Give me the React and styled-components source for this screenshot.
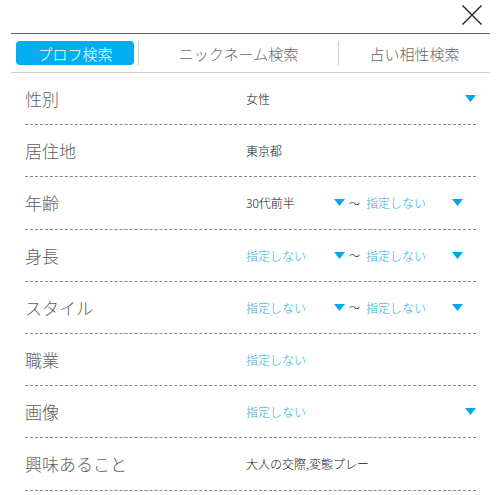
import React from "react";
import styled, { createGlobalStyle } from "styled-components";

const Global = createGlobalStyle`
  html, body { margin: 0; padding: 0; background: #fff; }
  body { font-family: "Noto Sans CJK JP", "Noto Sans", sans-serif; }
`;

const Page = styled.div`
  width: 501px;
  height: 495px;
  overflow: hidden;
  background: #fff;
`;

const TopBar = styled.div`
  height: 33px;
  display: flex;
  justify-content: flex-end;
  align-items: flex-start;
  padding-right: 19px;
  box-sizing: border-box;
`;

const CloseButton = styled.button`
  border: 0;
  background: none;
  padding: 0;
  margin-top: 5px;
  width: 20px;
  height: 20px;
  cursor: pointer;
  display: block;
`;

const Panel = styled.div`
  margin: 0 11px;
`;

const Tabs = styled.div`
  display: flex;
  align-items: center;
  border-top: 1px solid #666;
  border-bottom: 1px solid #ccc;
  padding: 7px 0;
`;

const Tab = styled.div`
  width: ${(p) => p.$w}px;
  height: 24px;
  display: flex;
  align-items: center;
  justify-content: center;
  box-sizing: border-box;
  border-left: ${(p) => (p.$divider ? "1px solid #ccc" : "0")};
`;

const TabButton = styled.div`
  height: 24px;
  width: 100%;
  display: flex;
  align-items: center;
  justify-content: center;
  border-radius: 4px;
  font-size: 15px;
  font-weight: 300;
  color: ${(p) => (p.$active ? "#fff" : "#666")};
  background: ${(p) => (p.$active ? "#00aeef" : "transparent")};
`;

const ActiveWrap = styled.div`
  width: 127px;
  padding: 0 4px 0 5px;
  box-sizing: border-box;
`;

const Rows = styled.div`
  padding: 0 14px;
`;

const Row = styled.div`
  display: flex;
  align-items: center;
  height: 52.2px;
  box-sizing: border-box;
  border-bottom: 1px dashed #888;
`;

const Label = styled.div`
  width: 221px;
  flex: none;
  font-size: 17px;
  font-weight: 300;
  color: #5e5e5e;
`;

const Value = styled.div`
  flex: 1;
  display: flex;
  align-items: center;
`;

const Select = styled.div`
  display: flex;
  align-items: center;
  justify-content: space-between;
  ${(p) => (p.$w ? `width: ${p.$w}px;` : "flex: 1;")}
  font-size: 12px;
  font-weight: 300;
  color: ${(p) => (p.$placeholder ? "#2ea7e0" : "#111")};
`;

const Plain = styled.div`
  font-size: 12px;
  font-weight: 300;
  color: #111;
`;

const LinkText = styled.div`
  font-size: 12px;
  font-weight: 300;
  color: #2ea7e0;
`;

const Tilde = styled.span`
  font-size: 11px;
  font-weight: 300;
  color: #111;
  margin: 0 6px 0 4px;
  width: 11px;
`;

const Caret = () => (
  <svg width="11" height="7" viewBox="0 0 11 7" style={{ display: "block" }}>
    <polygon points="0,0 11,0 5.5,7" fill="#00a8e8" />
  </svg>
);

const SelectBox = ({ text, w }) => (
  <Select $w={w} $placeholder={text === "指定しない"}>
    <span>{text}</span>
    <Caret />
  </Select>
);

const rows = [
  { label: "性別", type: "select", v: "女性" },
  { label: "居住地", type: "plain", v: "東京都" },
  { label: "年齢", type: "range", v: ["30代前半", "指定しない"] },
  { label: "身長", type: "range", v: ["指定しない", "指定しない"] },
  { label: "スタイル", type: "range", v: ["指定しない", "指定しない"] },
  { label: "職業", type: "link", v: "指定しない" },
  { label: "画像", type: "select", v: "指定しない" },
  { label: "興味あること", type: "plain", v: "大人の交際,変態プレー" },
];

export default function App() {
  return (
    <Page>
      <Global />
      <TopBar>
        <CloseButton aria-label="閉じる">
          <svg width="20" height="20" viewBox="0 0 20 20">
            <path d="M0.5 0.5 L19.5 19.5 M19.5 0.5 L0.5 19.5" stroke="#222" strokeWidth="1.4" />
          </svg>
        </CloseButton>
      </TopBar>
      <Panel>
        <Tabs>
          <ActiveWrap>
            <TabButton $active>プロフ検索</TabButton>
          </ActiveWrap>
          <Tab $w={200} $divider>
            <TabButton>ニックネーム検索</TabButton>
          </Tab>
          <Tab $w={152} $divider>
            <TabButton>占い相性検索</TabButton>
          </Tab>
        </Tabs>
        <Rows>
          {rows.map((r) => (
            <Row key={r.label}>
              <Label>{r.label}</Label>
              <Value>
                {r.type === "select" && <SelectBox text={r.v} />}
                {r.type === "plain" && <Plain>{r.v}</Plain>}
                {r.type === "link" && <LinkText>{r.v}</LinkText>}
                {r.type === "range" && (
                  <>
                    <SelectBox text={r.v[0]} w={99} />
                    <Tilde>〜</Tilde>
                    <SelectBox text={r.v[1]} w={97} />
                  </>
                )}
              </Value>
            </Row>
          ))}
        </Rows>
      </Panel>
    </Page>
  );
}
